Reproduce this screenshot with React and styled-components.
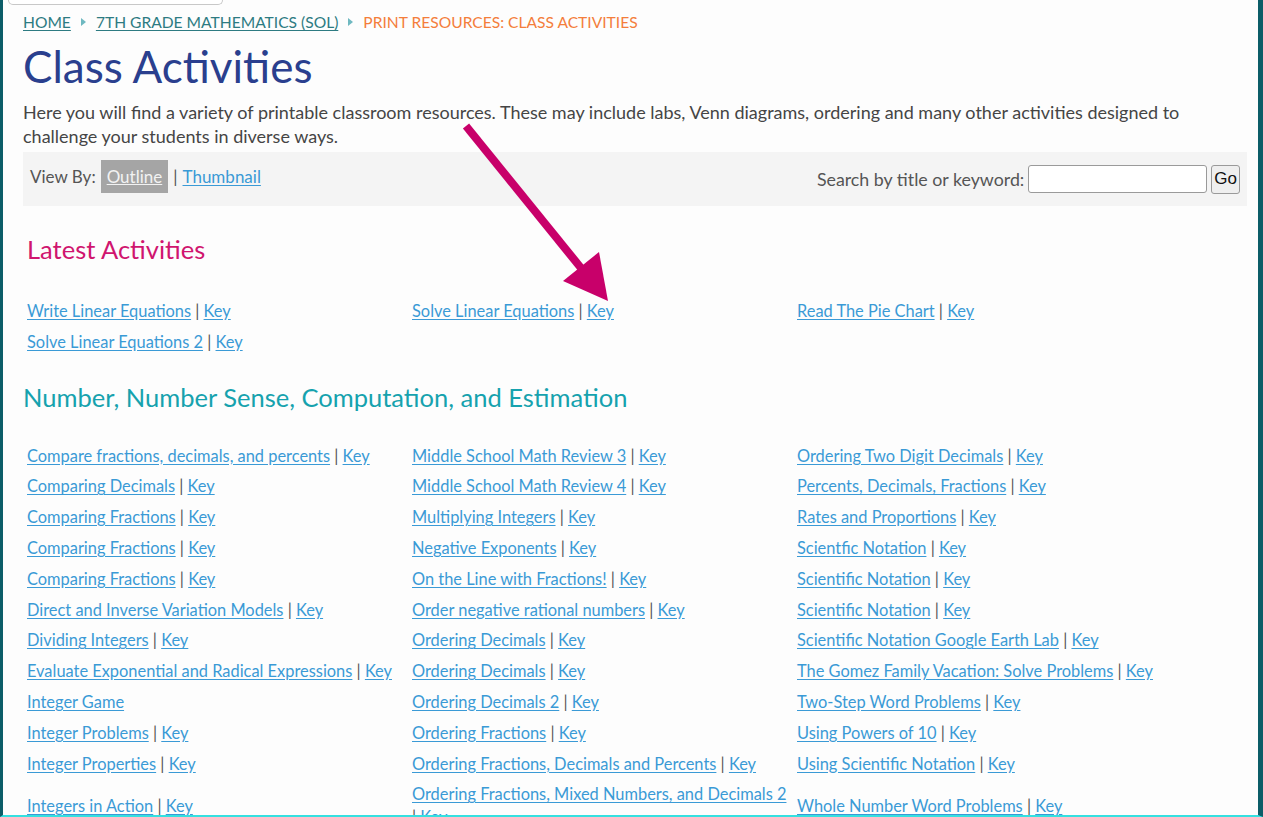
import React from 'react';
import styled, { createGlobalStyle } from 'styled-components';

const GlobalStyle = createGlobalStyle`
  html, body {
    margin: 0;
    padding: 0;
    background: #fdfdfd;
  }
  body {
    font-family: Lato, 'Open Sans', sans-serif;
  }
`;

const Frame = styled.div`
  position: relative;
  box-sizing: border-box;
  height: 817px;
  overflow: hidden;
  background: #fdfdfd;
  border-left: 3px solid #0c5d68;
  border-right: 5px solid #0c5d68;
  border-bottom: 2px solid #35e0e0;
`;

const TopStub = styled.div`
  box-sizing: border-box;
  margin-left: 5px;
  width: 215px;
  height: 5px;
  border: 1px solid #c8c8c8;
  border-top: none;
  border-radius: 0 0 5px 5px;
  background: #fff;
`;

const Content = styled.div`
  padding: 0 11px 0 20px;
`;

const Crumbs = styled.nav`
  display: flex;
  align-items: center;
  gap: 10px;
  margin-top: 7px;
  height: 20px;
  font-size: 15.6px;
  text-transform: uppercase;
`;

const Crumb = styled.a`
  color: ${(p) => (p.$current ? '#f47e3b' : '#2d7b82')};
  text-decoration: ${(p) => (p.$current ? 'none' : 'underline')};
  text-underline-offset: 2px;
`;

const CrumbArrow = styled.span`
  display: inline-block;
  width: 0;
  height: 0;
  border-top: 4px solid transparent;
  border-bottom: 4px solid transparent;
  border-left: 5px solid #6fb9c1;
`;

const Title = styled.h1`
  margin: 8px 0 0;
  font-size: 44px;
  font-weight: 400;
  line-height: 52px;
  color: #2a3f8e;
`;

const Intro = styled.p`
  margin: 8px 0 0;
  font-size: 18px;
  line-height: 24px;
  color: #454545;
`;

const ViewBar = styled.div`
  display: flex;
  align-items: center;
  justify-content: space-between;
  margin-top: 4px;
  height: 54px;
  padding: 0 7px;
  background: #f4f4f4;
  font-size: 17.8px;
  color: #555;
`;

const ViewBy = styled.div`
  display: flex;
  align-items: center;
  gap: 5px;
  margin-top: -6px;
  font-size: 17px;
`;

const ActiveView = styled.a`
  display: inline-block;
  padding: 6px 6px;
  background: #a5a5a5;
  color: #f2f2f2;
  text-decoration: underline;
`;

const Link = styled.a`
  color: #3a9ad6;
  text-decoration: underline;
  text-underline-offset: 2px;
  cursor: pointer;
`;

const SearchForm = styled.form`
  display: flex;
  align-items: center;
  gap: 4px;
`;

const SearchInput = styled.input`
  box-sizing: border-box;
  width: 179px;
  height: 28px;
  border: 1px solid #9a9a9a;
  border-radius: 3px;
  background: #fff;
`;

const GoButton = styled.button`
  box-sizing: border-box;
  height: 29px;
  padding: 0 2px;
  border: 1px solid #9a9a9a;
  border-radius: 3px;
  background: #efefef;
  font-family: 'Liberation Sans', Arial, sans-serif;
  font-size: 17px;
  color: #111;
`;

const SectionTitle = styled.h2`
  margin: ${(p) => p.$margin};
  padding-left: ${(p) => p.$indent || 0}px;
  font-size: 25.5px;
  font-weight: 400;
  line-height: 32px;
  color: ${(p) => p.$color};
`;

const Grid = styled.div`
  display: grid;
  grid-template-columns: repeat(3, 385px);
  align-items: center;
  margin-top: ${(p) => p.$top}px;
`;

const Cell = styled.div`
  padding: 4px 0 4px 4px;
  font-size: 16.4px;
  line-height: 22.8px;
  color: #555;
`;

const Arrow = styled.svg`
  position: absolute;
  left: 0;
  top: 0;
  pointer-events: none;
`;

const latest = [
  ['Write Linear Equations', true],
  ['Solve Linear Equations', true],
  ['Read The Pie Chart', true],
  ['Solve Linear Equations 2', true],
];

const number = [
  ['Compare fractions, decimals, and percents', true],
  ['Middle School Math Review 3', true],
  ['Ordering Two Digit Decimals', true],
  ['Comparing Decimals', true],
  ['Middle School Math Review 4', true],
  ['Percents, Decimals, Fractions', true],
  ['Comparing Fractions', true],
  ['Multiplying Integers', true],
  ['Rates and Proportions', true],
  ['Comparing Fractions', true],
  ['Negative Exponents', true],
  ['Scientfic Notation', true],
  ['Comparing Fractions', true],
  ['On the Line with Fractions!', true],
  ['Scientific Notation', true],
  ['Direct and Inverse Variation Models', true],
  ['Order negative rational numbers', true],
  ['Scientific Notation', true],
  ['Dividing Integers', true],
  ['Ordering Decimals', true],
  ['Scientific Notation Google Earth Lab', true],
  ['Evaluate Exponential and Radical Expressions', true],
  ['Ordering Decimals', true],
  ['The Gomez Family Vacation: Solve Problems', true],
  ['Integer Game', false],
  ['Ordering Decimals 2', true],
  ['Two-Step Word Problems', true],
  ['Integer Problems', true],
  ['Ordering Fractions', true],
  ['Using Powers of 10', true],
  ['Integer Properties', true],
  ['Ordering Fractions, Decimals and Percents', true],
  ['Using Scientific Notation', true],
  ['Integers in Action', true],
  ['Ordering Fractions, Mixed Numbers, and Decimals 2', true],
  ['Whole Number Word Problems', true],
];

const Activity = ({ title, hasKey }) => (
  <Cell>
    <Link>{title}</Link>
    {hasKey && (
      <>
        {' | '}
        <Link>Key</Link>
      </>
    )}
  </Cell>
);

const ActivityGrid = ({ items, top }) => (
  <Grid $top={top}>
    {items.map(([title, hasKey], i) => (
      <Activity key={i} title={title} hasKey={hasKey} />
    ))}
  </Grid>
);

export default function App() {
  return (
    <>
      <GlobalStyle />
      <Frame>
        <TopStub />
        <Content>
          <Crumbs>
            <Crumb>Home</Crumb>
            <CrumbArrow />
            <Crumb>7th Grade Mathematics (SOL)</Crumb>
            <CrumbArrow />
            <Crumb $current>Print Resources: Class Activities</Crumb>
          </Crumbs>
          <Title>Class Activities</Title>
          <Intro>
            Here you will find a variety of printable classroom resources. These may include labs, Venn
            diagrams, ordering and many other activities designed to challenge your students in diverse ways.
          </Intro>
          <ViewBar>
            <ViewBy>
              View By:
              <ActiveView>Outline</ActiveView>
              <span>|</span>
              <Link>Thumbnail</Link>
            </ViewBy>
            <SearchForm onSubmit={(e) => e.preventDefault()}>
              Search by title or keyword:
              <SearchInput type="text" />
              <GoButton type="submit">Go</GoButton>
            </SearchForm>
          </ViewBar>
          <SectionTitle $color="#d0156f" $indent={4} $margin="27px 0 0">
            Latest Activities
          </SectionTitle>
          <ActivityGrid items={latest} top={31} />
          <SectionTitle $color="#16a2ae" $margin="23px 0 0">
            Number, Number Sense, Computation, and Estimation
          </SectionTitle>
          <ActivityGrid items={number} top={28} />
        </Content>
        <Arrow width="1263" height="817" viewBox="0 0 1263 817">
          <line x1="463" y1="126" x2="578" y2="268" stroke="#c8006a" strokeWidth="8" />
          <polygon points="560,281 596,252 605,301" fill="#c8006a" />
        </Arrow>
      </Frame>
    </>
  );
}
